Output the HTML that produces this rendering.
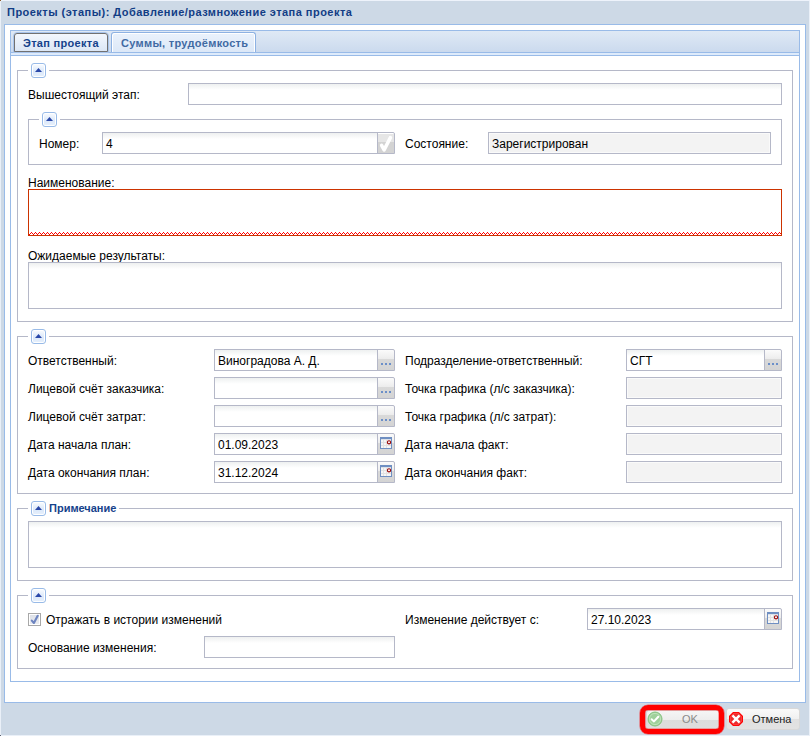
<!DOCTYPE html>
<html><head><meta charset="utf-8">
<style>
*{box-sizing:border-box;margin:0;padding:0}
html,body{width:810px;height:736px;overflow:hidden;background:#fff}
body{position:relative;font-family:"Liberation Sans",sans-serif;font-size:12px;color:#000}
.a{position:absolute}
.win{left:0;top:0;width:810px;height:736px;background:#cdd9e6;border-radius:2px 0 0 0;border-left:1px solid #eaf0f8;border-top:1px solid #eef3fb}
.title{left:7px;top:5px;font-weight:bold;font-size:11px;letter-spacing:0.47px;color:#123d85;line-height:14px;white-space:nowrap}
.body{left:4px;top:24px;width:802px;height:679px;background:#fff;border:1px solid #99bbe8}
.tabp{left:10px;top:30px;width:790px;height:652px;border:1px solid #99bbe8;background:#fff}
.strip{left:11px;top:31px;width:788px;height:22px;background:linear-gradient(#dfe9f5,#cbdaee);border-bottom:1px solid #99bbe8}
.spacer{left:11px;top:53px;width:788px;height:3px;background:#deebfb;border-bottom:1px solid #99bbe8}
.tab{height:19px;border:1px solid #8db2e3;border-bottom:none;border-radius:3px 3px 0 0;background:linear-gradient(#e9f1fb,#d2e0f1)}
.tabt{font-weight:bold;font-size:11px;line-height:14px;white-space:nowrap;letter-spacing:0.3px}
.fs{border:1px solid #b5b8c8}
.tg{width:15px;height:15px;border:1px solid #99bbe8;border-radius:3px;background:linear-gradient(#fafcff 0,#e4eefb 40%,#dbe8fa 60%,#e8f1fc 100%);box-shadow:inset 0 0 0 1px #fff}
.tg:after{content:"";position:absolute;left:3px;top:4px;width:7px;height:4px;background:#2a48a8;clip-path:polygon(0 100%,50% 0,100% 100%)}
.lg{background:#fff}
.t{line-height:14px;white-space:nowrap}
.in{height:22px;border:1px solid #b5b8c8;background:linear-gradient(#eef0f0,#fff 6px)}
.dis{height:22px;border:1px solid #b5b8c8;background:#f3f3f3;box-shadow:inset 0 0 0 1px #fafafa}
.trg{width:18px;height:22px;border:1px solid #b5b8c8;border-radius:0 2px 0 0;background:linear-gradient(#fbfbfb 0,#ececec 45%,#d9d9d9 45%,#d4d4d4 100%)}
.dots{left:3px;top:13px;width:2px;height:2px;background:#6b8fc9;box-shadow:4px 0 #6b8fc9,8px 0 #6b8fc9}
</style></head><body>
<div class="a win"></div>
<div class="a" style="left:0;top:0;width:1px;height:1px;background:#8a5a2a"></div><div class="a" style="left:0;top:735px;width:1px;height:1px;background:#5a6070;z-index:2"></div>
<div class="a" style="left:0;top:735px;width:810px;height:1px;background:#eaf0f8"></div><div class="a" style="left:809px;top:1px;width:1px;height:735px;background:#eaf0f8"></div>
<div class="a title">Проекты (этапы): Добавление/размножение этапа проекта</div>
<div class="a body"></div>
<div class="a tabp"></div>
<div class="a strip"></div>
<div class="a spacer"></div>
<div class="a tab" style="left:111px;top:32px;width:145px;height:20px;box-shadow:inset 1px 1px 0 #fff,inset -1px 0 0 #fff;background:linear-gradient(#eaf2fc,#dce8f7)"></div>
<div class="a tabt" style="left:121px;top:36px;color:#416aa3">Суммы, трудоёмкость</div>
<div class="a" style="left:13px;top:32px;width:96px;height:21px;border:1px solid #a9c4ea;border-radius:4px 4px 0 0"></div><div class="a tab" style="left:14px;top:33px;width:94px;height:19px;border-color:#717171;border-bottom:1px solid #717171;background:linear-gradient(#f3f7fd,#dce7f5)"></div>
<div class="a tabt" style="left:23px;top:36px;color:#15428b">Этап проекта</div>

<!-- fieldset 1 -->
<div class="a fs" style="left:17px;top:70px;width:776px;height:252px"></div>
<div class="a lg" style="left:28px;top:62px;width:21px;height:16px"></div>
<div class="a tg" style="left:31px;top:63px"></div>
<div class="a t" style="left:28px;top:88px">Вышестоящий этап:</div>
<div class="a in" style="left:188px;top:83px;width:594px"></div>

<div class="a fs" style="left:28px;top:119px;width:754px;height:46px"></div>
<div class="a lg" style="left:39px;top:111px;width:21px;height:16px"></div>
<div class="a tg" style="left:42px;top:112px"></div>
<div class="a t" style="left:39px;top:137px">Номер:</div>
<div class="a in" style="left:102px;top:132px;width:276px"></div>
<div class="a t" style="left:106px;top:137px">4</div>
<div class="a trg" style="left:377px;top:132px;background:linear-gradient(#fff 0,#fff 1px,#e6e6e6 1px,#e6e6e6 45%,#d3d3d3 45%,#d3d3d3 100%)"><svg class="a" style="left:-1px;top:-1px" width="18" height="22" viewBox="0 0 18 22"><path d="M4.6 13.4L7.1 17.9L13.4 5.6" fill="none" stroke="#fff" stroke-width="3.5" stroke-linecap="round" stroke-linejoin="round"/></svg></div>
<div class="a t" style="left:405px;top:137px">Состояние:</div>
<div class="a dis" style="left:488px;top:132px;width:283px"></div>
<div class="a t" style="left:492px;top:137px">Зарегистрирован</div>

<div class="a t" style="left:28px;top:176px">Наименование:</div>
<div class="a" style="left:28px;top:189px;width:754px;height:47px;border:1px solid #cc3300"></div>
<svg class="a" style="left:29px;top:232px" width="752" height="3"><defs><pattern id="wv" width="4" height="3" patternUnits="userSpaceOnUse"><rect x="0" y="2" width="1" height="1" fill="#f00"/><rect x="1" y="1" width="1" height="1" fill="#f00"/><rect x="2" y="0" width="1" height="1" fill="#f00"/><rect x="3" y="1" width="1" height="1" fill="#f00"/></pattern></defs><rect width="752" height="3" fill="url(#wv)"/></svg>
<div class="a t" style="left:28px;top:249px">Ожидаемые результаты:</div>
<div class="a in" style="left:28px;top:262px;width:754px;height:47px"></div>

<!-- fieldset 2 -->
<div class="a fs" style="left:17px;top:336px;width:776px;height:158px"></div>
<div class="a lg" style="left:28px;top:328px;width:21px;height:16px"></div>
<div class="a tg" style="left:31px;top:329px"></div>

<div class="a t" style="left:28px;top:354px">Ответственный:</div>
<div class="a in" style="left:214px;top:349px;width:164px"></div>
<div class="a t" style="left:218px;top:354px">Виноградова А. Д.</div>
<div class="a trg" style="left:377px;top:349px"><div class="a dots"></div></div>
<div class="a t" style="left:405px;top:354px">Подразделение-ответственный:</div>
<div class="a in" style="left:626px;top:349px;width:139px"></div>
<div class="a t" style="left:630px;top:354px">СГТ</div>
<div class="a trg" style="left:764px;top:349px"><div class="a dots"></div></div>

<div class="a t" style="left:28px;top:382px">Лицевой счёт заказчика:</div>
<div class="a in" style="left:214px;top:377px;width:164px"></div>
<div class="a trg" style="left:377px;top:377px"><div class="a dots"></div></div>
<div class="a t" style="left:405px;top:382px">Точка графика (л/с заказчика):</div>
<div class="a dis" style="left:626px;top:377px;width:156px"></div>

<div class="a t" style="left:28px;top:410px">Лицевой счёт затрат:</div>
<div class="a in" style="left:214px;top:405px;width:164px"></div>
<div class="a trg" style="left:377px;top:405px"><div class="a dots"></div></div>
<div class="a t" style="left:405px;top:410px">Точка графика (л/с затрат):</div>
<div class="a dis" style="left:626px;top:405px;width:156px"></div>

<div class="a t" style="left:28px;top:438px">Дата начала план:</div>
<div class="a in" style="left:214px;top:433px;width:164px"></div>
<div class="a t" style="left:218px;top:438px">01.09.2023</div>
<div class="a trg cal" style="left:377px;top:433px"><svg class="a" style="left:2px;top:3px" width="12" height="12" viewBox="0 0 12 12"><rect x="0.5" y="0.5" width="11" height="11" fill="#f6f6f6" stroke="#6f8fc2"/><rect x="0" y="0" width="12" height="2.2" fill="#6f8fc2"/><path d="M3.5 2v9M6.5 2v9M1 5.5h10M1 8.5h10" stroke="#e2e2e2" stroke-width="1"/><circle cx="9" cy="5.3" r="1.6" fill="#fff" stroke="#9a0a0a" stroke-width="1.15"/></svg></div>
<div class="a t" style="left:405px;top:438px">Дата начала факт:</div>
<div class="a dis" style="left:626px;top:433px;width:156px"></div>

<div class="a t" style="left:28px;top:466px">Дата окончания план:</div>
<div class="a in" style="left:214px;top:461px;width:164px"></div>
<div class="a t" style="left:218px;top:466px">31.12.2024</div>
<div class="a trg cal" style="left:377px;top:461px"><svg class="a" style="left:2px;top:3px" width="12" height="12" viewBox="0 0 12 12"><rect x="0.5" y="0.5" width="11" height="11" fill="#f6f6f6" stroke="#6f8fc2"/><rect x="0" y="0" width="12" height="2.2" fill="#6f8fc2"/><path d="M3.5 2v9M6.5 2v9M1 5.5h10M1 8.5h10" stroke="#e2e2e2" stroke-width="1"/><circle cx="9" cy="5.3" r="1.6" fill="#fff" stroke="#9a0a0a" stroke-width="1.15"/></svg></div>
<div class="a t" style="left:405px;top:466px">Дата окончания факт:</div>
<div class="a dis" style="left:626px;top:461px;width:156px"></div>

<!-- fieldset 3 -->
<div class="a fs" style="left:17px;top:508px;width:776px;height:73px"></div>
<div class="a lg" style="left:28px;top:500px;width:91px;height:16px"></div>
<div class="a tg" style="left:31px;top:501px"></div>
<div class="a tabt" style="left:49px;top:501px;color:#15428b;letter-spacing:0">Примечание</div>
<div class="a in" style="left:28px;top:521px;width:754px;height:47px"></div>

<!-- fieldset 4 -->
<div class="a fs" style="left:17px;top:595px;width:776px;height:74px"></div>
<div class="a lg" style="left:28px;top:587px;width:21px;height:16px"></div>
<div class="a tg" style="left:31px;top:588px"></div>
<div class="a" style="left:28px;top:613px;width:13px;height:13px;border:1px solid #a8a8a8;background:linear-gradient(#dcdfe6,#eceef2);box-shadow:inset 0 0 0 1px #fff"><svg class="a" style="left:-1px;top:-1px" width="13" height="13" viewBox="0 0 13 13"><path d="M3.8 7.6L5.9 10L9.7 2.8" fill="none" stroke="#6d84c0" stroke-width="2.1" stroke-linecap="round" stroke-linejoin="round"/></svg></div>
<div class="a t" style="left:46px;top:613px">Отражать в истории изменений</div>
<div class="a t" style="left:405px;top:613px">Изменение действует с:</div>
<div class="a in" style="left:587px;top:608px;width:178px"></div>
<div class="a t" style="left:591px;top:613px">27.10.2023</div>
<div class="a trg cal" style="left:764px;top:608px"><svg class="a" style="left:2px;top:3px" width="12" height="12" viewBox="0 0 12 12"><rect x="0.5" y="0.5" width="11" height="11" fill="#f6f6f6" stroke="#6f8fc2"/><rect x="0" y="0" width="12" height="2.2" fill="#6f8fc2"/><path d="M3.5 2v9M6.5 2v9M1 5.5h10M1 8.5h10" stroke="#e2e2e2" stroke-width="1"/><circle cx="9" cy="5.3" r="1.6" fill="#fff" stroke="#9a0a0a" stroke-width="1.15"/></svg></div>
<div class="a t" style="left:28px;top:641px">Основание изменения:</div>
<div class="a in" style="left:204px;top:636px;width:191px"></div>

<!-- buttons -->
<div class="a" style="left:646px;top:710px;width:74px;height:20px;border-radius:3px;background:linear-gradient(#f5f5f5 0,#ededed 50%,#dcdcdc 50%,#dedede 100%);border:1px solid #d8d8d8"></div>
<svg class="a" style="left:647px;top:711px" width="16" height="16" viewBox="0 0 16 16"><circle cx="8" cy="8" r="7" fill="#9fd09b" stroke="#86c281" stroke-width="1"/><circle cx="8" cy="8" r="5.6" fill="none" stroke="#c5e6c2" stroke-width="0.8"/><path d="M4.6 8.2L7 10.4L11.3 5.8" fill="none" stroke="#fff" stroke-width="2" stroke-linecap="round" stroke-linejoin="round"/></svg>
<div class="a t" style="left:682px;top:712px;color:#8a8a8a;font-size:11px">OK</div>
<div class="a" style="left:726px;top:708px;width:74px;height:22px;border-radius:3px;background:linear-gradient(#fafafa 0,#f0f0f0 50%,#e0e0e0 50%,#e2e2e2 100%);border:1px solid #d8d8d8"></div>
<svg class="a" style="left:729px;top:712px" width="14" height="14" viewBox="0 0 14 14"><polygon points="4,0 10,0 14,4 14,10 10,14 4,14 0,10 0,4" fill="#ff0000"/><polygon points="4.6,1.4 9.4,1.4 12.6,4.6 12.6,9.4 9.4,12.6 4.6,12.6 1.4,9.4 1.4,4.6" fill="#ec2c2c" stroke="#ff5a5a" stroke-width="0.6"/><path d="M4.3 4.3L9.7 9.7M9.7 4.3L4.3 9.7" stroke="#fff" stroke-width="2.4" stroke-linecap="square"/></svg>
<div class="a t" style="left:752px;top:712px;font-size:11px;color:#222">Отмена</div>
<div class="a" style="left:640px;top:705px;width:84px;height:29px;border:5px solid #ff0000;border-radius:8px;box-shadow:0 0 0.6px 0.6px rgba(255,0,0,.55),inset 0 0 0.6px 0.6px rgba(255,0,0,.55)"></div>
</body></html>
